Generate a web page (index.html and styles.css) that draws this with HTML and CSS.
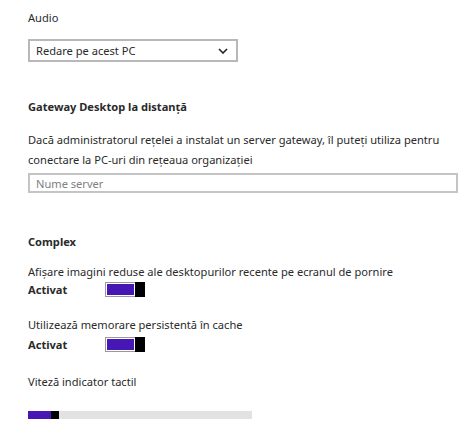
FILE: index.html
```html
<!DOCTYPE html>
<html lang="ro">
<head>
    <meta charset="UTF-8">
    <meta name="viewport" content="width=device-width, initial-scale=1.0">
    <title>Setări Desktop la distanță</title>
    <link rel="stylesheet" href="styles.css">
</head>
<body>
    <div class="panel">
        <!-- Audio -->
        <div class="label">Audio</div>
        <div class="dropdown">
            <span>Redare pe acest PC</span>
            <svg class="chevron" width="10" height="6" viewBox="0 0 10 6">
                <polyline points="1,1 5,5 9,1" fill="none" stroke="#222" stroke-width="1.6"/>
            </svg>
        </div>

        <!-- Gateway -->
        <h3 class="heading gateway">Gateway Desktop la distanță</h3>
        <p class="desc">Dacă administratorul rețelei a instalat un server gateway, îl puteți utiliza pentru conectare la PC-uri din rețeaua organizației</p>
        <input class="server" type="text" placeholder="Nume server">

        <!-- Complex -->
        <h3 class="heading complex">Complex</h3>
        <div class="label option">Afișare imagini reduse ale desktopurilor recente pe ecranul de pornire</div>
        <div class="switch-row">
            <span class="state">Activat</span>
            <span class="toggle"><span class="track"><span class="fill"></span></span><span class="thumb"></span></span>
        </div>
        <div class="label option second">Utilizează memorare persistentă în cache</div>
        <div class="switch-row">
            <span class="state">Activat</span>
            <span class="toggle"><span class="track"><span class="fill"></span></span><span class="thumb"></span></span>
        </div>

        <div class="label option speed">Viteză indicator tactil</div>
        <div class="slider">
            <span class="slider-fill"></span><span class="slider-thumb"></span>
        </div>
    </div>
</body>
</html>
```

FILE: styles.css
```css
body {
    margin: 0;
    padding: 0;
    background: #fff;
    color: #2a2a2a;
    font-family: "Noto Sans", "Open Sans", sans-serif;
    font-size: 11.1px;
}
.panel {
    padding: 8px 0 0 28px;
}
.label {
    line-height: 20px;
}
.dropdown {
    margin-top: 11px;
    width: 210px;
    height: 23px;
    box-sizing: border-box;
    border: 2px solid #b8b8b8;
    display: flex;
    align-items: center;
    justify-content: space-between;
    padding: 0 8px 0 6px;
}
.heading {
    margin: 0;
    font-size: 11.1px;
    font-weight: bold;
    line-height: 20px;
}
.gateway {
    margin-top: 35px;
}
.desc {
    margin: 13px 0 0 0;
    line-height: 20px;
    width: 430px;
}
.server {
    display: block;
    margin-top: 3px;
    width: 430px;
    height: 20px;
    box-sizing: border-box;
    border: 2px solid #c4c4c4;
    padding: 0 6px;
    font-family: inherit;
    font-size: 11.1px;
    outline: none;
}
.server::placeholder {
    color: #808080;
}
.complex {
    margin-top: 39px;
}
.option {
    margin-top: 10px;
}
.option.second {
    margin-top: 18px;
}
.option.speed {
    margin-top: 20px;
}
.switch-row {
    display: flex;
    align-items: center;
    height: 15px;
}
.option.second + .switch-row {
    margin-top: 2px;
}
.state {
    width: 77px;
    font-weight: bold;
}
.toggle {
    display: flex;
    width: 40px;
    height: 15px;
}
.track {
    flex: 1;
    border: 1px solid #999;
    padding: 1px;
    background: #fff;
    border-right: none;
}
.fill {
    display: block;
    height: 100%;
    background: #4617b4;
}
.thumb {
    width: 10px;
    background: #000;
}
.slider {
    margin-top: 19px;
    width: 224px;
    height: 8px;
    background: #e2e2e2;
    display: flex;
}
.slider-fill {
    width: 23px;
    background: #4617b4;
}
.slider-thumb {
    width: 8px;
    background: #000;
}
```
